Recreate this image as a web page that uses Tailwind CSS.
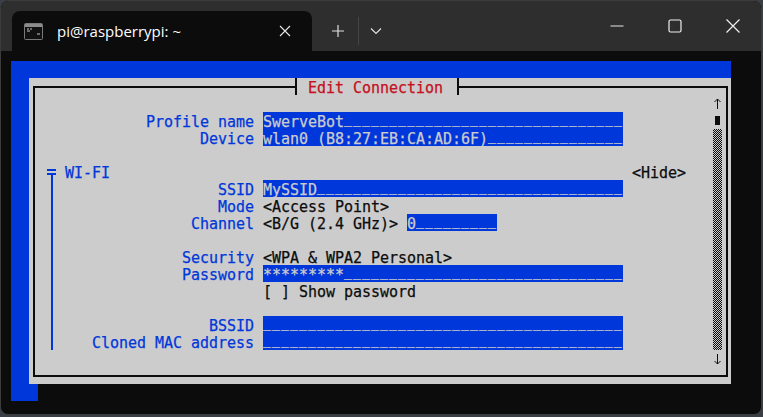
<!doctype html>
<html lang="en">
  <head>
    <meta charset="UTF-8" />
    <title>pi@raspberrypi: ~</title>
    <script src="https://cdn.jsdelivr.net/npm/@tailwindcss/browser@4"></script>
  </head>
  <body class="w-[763px] h-[417px] overflow-hidden bg-[#3a3f45]">
    <div class="w-[762px] h-[415px] flex flex-col rounded-[8px] overflow-hidden border border-[#3c3c3c] bg-[#0c0c0c]">
      <!-- title bar -->
      <div class="h-[50px] shrink-0 bg-[#2e2e2e] flex items-end pl-[11px] font-['Open_Sans',sans-serif] text-white">
        <div class="w-[300px] h-[40px] bg-[#0c0c0c] rounded-t-[8px] flex items-center pl-[12px] pr-[21px]">
          <svg width="19" height="17" viewBox="0 0 19 17" class="shrink-0">
            <rect x="0.5" y="0.5" width="18" height="16" rx="1" fill="#111" stroke="#7a7a7a" />
            <rect x="1" y="1" width="17" height="3" fill="#8c8c8c" />
            <path d="M3 6h2M6 6h2M3 8h3M13 11h3" stroke="#c8c8c8" stroke-width="1" />
          </svg>
          <span class="ml-[14px] text-[15px] leading-[20px]">pi@raspberrypi: ~</span>
          <svg width="12" height="12" viewBox="0 0 12 12" class="ml-auto" fill="none" stroke="#e6e6e6" stroke-width="1.1"><path d="M1 1l10 10M11 1L1 11" /></svg>
        </div>
        <div class="h-[40px] flex items-center">
          <svg width="14" height="14" viewBox="0 0 14 14" class="ml-[19px]" fill="none" stroke="#e0e0e0" stroke-width="1.2"><path d="M7 1v12M1 7h12" /></svg>
          <div class="w-px h-[28px] bg-[#454545] ml-[13px]"></div>
          <svg width="12" height="8" viewBox="0 0 12 8" class="ml-[11px]" fill="none" stroke="#e0e0e0" stroke-width="1.2"><path d="M1 1.5l5 5 5-5" /></svg>
        </div>
        <div class="ml-auto h-[50px] flex items-start pt-[18px] pr-[21px]">
          <svg width="14" height="14" viewBox="0 0 14 14" fill="none" stroke="#e6e6e6" stroke-width="1.2"><path d="M0.5 7h13" /></svg>
          <svg width="14" height="14" viewBox="0 0 14 14" class="ml-[44px]" fill="none" stroke="#f0f0f0" stroke-width="1.2"><rect x="1" y="1" width="12" height="12" rx="1.5" /></svg>
          <svg width="14" height="14" viewBox="0 0 14 14" class="ml-[44px]" fill="none" stroke="#f0f0f0" stroke-width="1.2"><path d="M0.5 0.5l13 13M13.5 0.5l-13 13" /></svg>
        </div>
      </div>
      <!-- terminal -->
      <div class="flex-1 pt-[10px] pl-[10px] font-['DejaVu_Sans_Mono',monospace] text-[15px] leading-[21px] tracking-[-0.03px] whitespace-nowrap text-[#0037da] [-webkit-text-stroke:0.25px]">
        <div class="w-[720px] h-[17px] bg-[#0037da]"></div>
        <div class="flex w-[720px] h-[306px] bg-[#0037da] pl-[18px]">
          <div class="relative w-[702px] h-[306px] bg-[#cccccc] pt-[8px] pl-[4px] pr-[3px] pb-[7px]">
            <div class="absolute top-0 left-[266px] w-[164px] h-[17px] bg-[#cccccc] border-x-2 border-[#0c0c0c] pl-[11px] text-[#c50f1f]">Edit Connection</div>
            <div class="h-full border-2 border-[#0c0c0c] pt-[7px] flex">
              <div class="w-[678px]">
                <div class="h-[17px]"></div>
                <div class="flex h-[17px]">
                  <div class="w-[219px] text-right">Profile name</div>
                  <div class="ml-[9px] w-[360px] bg-[#0037da] text-[#cccccc]">SwerveBot<span class="relative -top-[3px] text-[13px] tracking-[1.17px]">_______________________________</span></div>
                </div>
                <div class="flex h-[17px]">
                  <div class="w-[219px] text-right">Device</div>
                  <div class="ml-[9px] w-[360px] bg-[#0037da] text-[#cccccc]">wlan0 (B8:27:EB:CA:AD:6F)<span class="relative -top-[3px] text-[13px] tracking-[1.17px]">_______________</span></div>
                </div>
                <div class="h-[17px]"></div>
                <!-- wi-fi section -->
                <div class="flex h-[187px]">
                  <div class="w-[21px] pl-[12px] pt-[6px] flex flex-col">
                    <div class="w-[9px] h-[6px] border-y-2 border-[#0037da] shrink-0"></div>
                    <div class="ml-[4px] w-[2px] flex-1 bg-[#0037da]"></div>
                  </div>
                  <div class="flex-1">
                    <div class="flex h-[17px] pl-[9px]">
                      <div class="w-[567px]">WI-FI</div>
                      <div class="text-[#0c0c0c]">&lt;Hide&gt;</div>
                    </div>
                    <div class="flex h-[17px]">
                      <div class="w-[198px] text-right">SSID</div>
                      <div class="ml-[9px] w-[360px] bg-[#0037da] text-[#cccccc]">MySSID<span class="relative -top-[3px] text-[13px] tracking-[1.17px]">__________________________________</span></div>
                    </div>
                    <div class="flex h-[17px]">
                      <div class="w-[198px] text-right">Mode</div>
                      <div class="ml-[9px] text-[#0c0c0c]">&lt;Access Point&gt;</div>
                    </div>
                    <div class="flex h-[17px]">
                      <div class="w-[198px] text-right">Channel</div>
                      <div class="ml-[9px] w-[144px] text-[#0c0c0c]">&lt;B/G (2.4 GHz)&gt;</div>
                      <div class="w-[90px] bg-[#0037da] text-[#cccccc]">0<span class="relative -top-[3px] text-[13px] tracking-[1.17px]">_________</span></div>
                    </div>
                    <div class="h-[17px]"></div>
                    <div class="flex h-[17px]">
                      <div class="w-[198px] text-right">Security</div>
                      <div class="ml-[9px] text-[#0c0c0c]">&lt;WPA &amp; WPA2 Personal&gt;</div>
                    </div>
                    <div class="flex h-[17px]">
                      <div class="w-[198px] text-right">Password</div>
                      <div class="ml-[9px] w-[360px] bg-[#0037da] text-[#cccccc]">*********<span class="relative -top-[3px] text-[13px] tracking-[1.17px]">_______________________________</span></div>
                    </div>
                    <div class="flex h-[17px] pl-[207px] text-[#0c0c0c]">[ ] Show password</div>
                    <div class="h-[17px]"></div>
                    <div class="flex h-[17px]">
                      <div class="w-[198px] text-right">BSSID</div>
                      <div class="ml-[9px] w-[360px] bg-[#0037da] text-[#cccccc]"><span class="relative -top-[3px] text-[13px] tracking-[1.17px]">________________________________________</span></div>
                    </div>
                    <div class="flex h-[17px]">
                      <div class="w-[198px] text-right">Cloned MAC address</div>
                      <div class="ml-[9px] w-[360px] bg-[#0037da] text-[#cccccc]"><span class="relative -top-[3px] text-[13px] tracking-[1.17px]">________________________________________</span></div>
                    </div>
                  </div>
                </div>
              </div>
              <!-- scrollbar -->
              <div class="w-[9px] flex flex-col">
                <svg width="9" height="17" viewBox="0 0 9 17" fill="none" stroke="#0c0c0c" stroke-width="1"><path d="M4.5 4v10M1.5 7l3-3 3 3" /></svg>
                <div class="h-[17px] pt-[4px] pl-[2px]"><div class="w-[5px] h-[9px] bg-[#0c0c0c]"></div></div>
                <div class="h-[221px] bg-[repeating-conic-gradient(#0c0c0c_0_25%,#cccccc_0_50%)] bg-size-[2px_2px]"></div>
                <svg width="9" height="17" viewBox="0 0 9 17" fill="none" stroke="#0c0c0c" stroke-width="1"><path d="M4.5 4v10M1.5 11l3 3 3-3" /></svg>
              </div>
            </div>
          </div>
        </div>
        <div class="w-[27px] h-[17px] bg-[#0037da]"></div>
      </div>
    </div>
  </body>
</html>
